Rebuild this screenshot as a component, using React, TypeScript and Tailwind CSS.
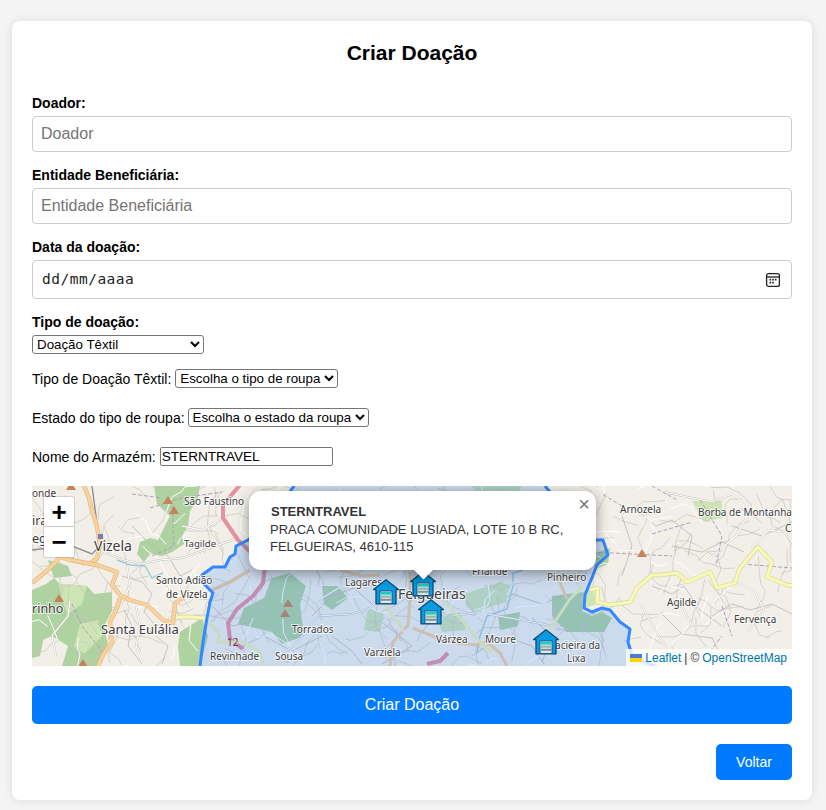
import React from 'react';

const inputCls =
  "w-full h-9 px-2 border border-[#ccc] rounded-[4px] text-base text-black placeholder:text-[#757575] bg-white outline-none";
const selectCls =
  "h-[19px] border border-[#767676] rounded-[3px] bg-white text-[13.33px] text-black";

const BOUNDARY =
  "M168 180 L171 156 L175 132 L178 116 L181 107 L170 96 L170 89 L181 81 L193 81 L198 71 L203 68 L204 60 L210 57 L216 54 L240 30 L262 0";
const BOUNDARY_EAST =
  "M513 0 L530 20 L564 54 L571 54 L576 69 L565 79 L553 109 L552 122 L560 126 L570 122 L578 124 L588 136 L598 143 L596 156 L600 169 L615 177 L628 182";

const FORESTS = [
  "M122 0 L168 0 L166 12 L158 25 L156 40 L150 50 L152 58 L140 66 L130 70 L118 68 L112 76 L105 68 L108 56 L118 52 L126 54 L132 42 L138 30 L125 18 Z",
  "M0 104 L14 98 L22 92 L28 98 L55 100 L62 108 L80 106 L80 125 L72 140 L76 160 L68 180 L30 180 L36 160 L20 150 L6 156 L0 150 Z",
  "M16 74 L36 80 L40 90 L22 92 Z",
  "M148 146 L170 132 L176 150 L168 180 L148 180 L146 160 Z",
  "M240 92 L258 87 L274 100 L268 118 L272 150 L250 158 L240 146 L206 138 L212 122 L232 112 Z",
  "M290 100 L306 100 L316 112 L300 124 L292 118 Z",
  "M0 148 L12 150 L8 170 L0 172 Z",
  "M520 110 L552 106 L550 125 L560 130 L570 126 L580 132 L572 146 L534 146 L520 130 Z",
  "M466 130 L488 126 L486 140 L468 144 Z",
  "M555 70 L578 62 L576 78 L566 82 Z",
];
const LIGHT_FORESTS = [
  "M433 108 L468 96 L480 100 L474 116 L442 126 L434 120 Z",
  "M336 122 L352 128 L348 146 L332 144 Z",
  "M405 130 L428 126 L434 144 L410 146 Z",
  "M27 98 L55 100 L50 118 L36 128 L30 115 Z",
  "M48 138 L66 134 L70 150 L52 168 L42 160 Z",
  "M552 105 L560 100 L566 118 L552 122 Z",
  "M440 0 L490 0 L486 6 L444 6 Z",
  "M660 15 L690 15 L690 32 L672 36 Z",
];
const GREY_ROADS = [
  "M6 60 L20 68 L34 66 L44 74",
  "M100 40 L120 60 L136 70 L148 90 L160 84",
  "M90 90 L110 96 L120 108 L112 126 L124 140",
  "M92 124 L100 140 L96 160 L110 178",
  "M124 150 L136 160 L130 178",
  "M600 20 L624 40 L640 34 L660 50 L656 70",
  "M620 100 L640 108 L652 100 L668 124 L690 140",
  "M680 130 L700 118 L718 124 L740 118 L760 128",
  "M610 135 L630 128 L650 148 L680 152 L692 175",
  "M590 30 L600 60 L590 90",
  "M700 40 L730 50 L760 36",
  "M640 60 L670 66 L690 56 L712 66",
  "M280 130 L300 110 L322 102 L340 118",
  "M350 136 L380 160 L350 178",
  "M440 170 L470 150 L500 160 L512 178",
  "M480 108 L510 118 L530 110",
  "M210 160 L232 150 L260 165 L290 150",
  "M300 150 L320 165 L330 178",
  "M180 120 L200 140 L220 136",
  "M500 132 L520 150 L510 176",
];
const WHITE_ROADS = [
  "M72 66 L92 74 L110 78 L128 74 L150 72 L178 62 L206 52",
  "M95 80 L98 100 L88 120",
  "M38 115 L36 130 L20 150 L24 170",
  "M104 120 L108 140 L104 160 L110 176",
  "M150 40 L170 44 L190 32",
  "M632 6 L660 12 L680 16 L700 8 L720 22 L704 50 L676 74",
  "M720 62 L736 44 L752 46 L760 56",
  "M700 92 L724 108 L732 124 L716 145",
  "M610 120 L622 142 L640 170",
  "M650 120 L660 140 L676 140",
  "M0 50 L20 62 L30 60",
  "M290 124 L290 112 L310 100 M286 130 L320 128 L338 122",
  "M244 170 L262 160 L286 130",
  "M370 92 L350 110 L330 130",
  "M455 128 L500 136 L532 142",
  "M420 130 L450 126",
];
const ORANGE_ROADS = [
  "M52 0 L57 12 L60 25 L65 40 L68 60 L65 72 L58 78",
  "M0 97 L18 82 L28 71 L38 74 L65 79 L85 86 L80 99 L88 109 L98 114 L115 119 L131 134 L141 137 L143 117 L151 112",
  "M88 112 L85 122 L78 136 L80 156 L71 169 L66 180",
];
const TINT_ORANGE = [
  "M308 84 L330 90 L348 89",
  "M378 86 L378 112 L376 139 L361 156 L358 180",
  "M381 142 L415 156 L445 159 L455 156 L468 167 L475 180",
  "M526 92 L535 113",
];
const YELLOW_ROADS = [
  "M145 131 L160 131 L173 132",
  "M558 104 L566 102 L565 116 L578 119 L598 116 L605 102 L620 89 L628 89 L645 87 L655 96 L678 86 L685 102 L703 97 L708 82 L726 61 L740 76 L735 91 L755 99 L762 100",
];
const TINT_YELLOW = [
  "M173 132 L188 149 L185 156 L211 156 L228 166 L231 178",
  "M353 119 L368 139 L372 146",
  "M408 112 L428 132 L448 156 L460 166",
  "M511 167 L520 140 L538 113 L551 100",
];
const PEAKS: [number, number][] = [
  [136, 14], [142, 24], [39, 0], [27, 112], [51, 177], [256, 117], [253, 127], [610, 67],
];
const MARKERS: [number, number][] = [
  [354, 106], [391, 98], [399, 126], [514, 156],
];
type MapLabel = [string, number, number, number];
const LABELS: MapLabel[] = [
  ["onde", 0, 11, 10], ["ira", 0, 39, 12.5], ["eg", 0, 57, 12.5],
  ["São Faustino", 152, 19, 10], ["Vizela", 62, 65, 14], ["Tagilde", 152, 61, 9.6],
  ["Santo Adião", 124, 98, 10], ["de Vizela", 134, 112, 10], ["Santa Eulália", 69, 148, 13],
  ["rinho", 0, 127, 12.5], ["Revinhade", 178, 174, 10], ["Sousa", 243, 174, 10],
  ["Torrados", 260, 147, 10], ["Lagares", 313, 100, 10], ["Felgueiras", 366, 113, 14],
  ["Varziela", 332, 170, 10], ["Friande", 440, 89, 10], ["Pinheiro", 515, 95, 10],
  ["Várzea", 404, 157, 10], ["Moure", 453, 157, 10], ["Macieira da", 514, 163, 10],
  ["Lixa", 535, 176, 10], ["Arnozela", 588, 27, 10], ["Borba de Montanha", 666, 30, 10],
  ["Agilde", 635, 120, 10], ["Fervença", 702, 137, 10], ["Ca", 753, 46, 10],
];

// thin street mesh, the tiles are full of these tiny lines
const buildMesh = (count: number, seed: number) => {
  let s = seed;
  const rnd = () => {
    s = (s * 16807) % 2147483647;
    return s / 2147483647;
  };
  let d = "";
  for (let i = 0; i < count; i++) {
    let x = rnd() * 760;
    let y = rnd() * 180;
    d += `M${x.toFixed(1)} ${y.toFixed(1)}`;
    let a = rnd() * 6.28;
    const steps = 2 + Math.floor(rnd() * 4);
    for (let j = 0; j < steps; j++) {
      a += (rnd() - 0.5) * 1.8;
      const l = 5 + rnd() * 12;
      x += Math.cos(a) * l;
      y += Math.sin(a) * l;
      d += `L${x.toFixed(1)} ${y.toFixed(1)}`;
    }
  }
  return d;
};
const GREY_MESH = buildMesh(260, 4711);
const WHITE_MESH = buildMesh(70, 90210);

const Marker: React.FC<{ x: number; y: number }> = ({ x, y }) => (
  <g transform={`translate(${x - 13} ${y - 13})`}>
    <path d="M13 .8 L25.4 10.6 L23 10.6 L23 24.8 L3 24.8 L3 10.6 L.6 10.6 Z" fill="#089be2" stroke="#0d4b76" strokeWidth="1.3" strokeLinejoin="round" />
    <rect x="7" y="12" width="12" height="12.5" fill="#dfe8e8" stroke="#0d4b76" strokeWidth=".8" />
    <rect x="7.5" y="13" width="11" height="2.6" fill="#19cfc0" />
    <rect x="7.5" y="16.6" width="11" height="2.2" fill="#9fb3b3" />
    <rect x="7.5" y="19.8" width="11" height="2" fill="#7f8f92" />
  </g>
);

const MapDrawing: React.FC = () => (
  <svg viewBox="0 0 760 180" className="block w-[760px] h-[180px]">
    <rect width="760" height="180" fill="#f2efe9" />
    {FORESTS.map((d, i) => <path key={i} d={d} fill="#aed2a0" />)}
    {LIGHT_FORESTS.map((d, i) => <path key={i} d={d} fill="#cde4b4" />)}
    <path d={GREY_MESH} fill="none" stroke="#c9c5bd" strokeWidth=".7" />
    {GREY_ROADS.map((d, i) => <path key={i} d={d} fill="none" stroke="#bdb9b1" strokeWidth=".8" />)}
    <path d="M85 74 L98 79 L113 80 L120 92 L131 87 M445 167 L448 150 L455 130 L475 123 L481 100 L481 87 L492 84" fill="none" stroke="#9fcbdc" strokeWidth="1.4" />
    <path d={WHITE_MESH} fill="none" stroke="#fff" strokeWidth="1" />
    {WHITE_ROADS.map((d, i) => (
      <g key={i} fill="none">
        <path d={d} stroke="#c4c0b8" strokeWidth="1.9" />
        <path d={d} stroke="#fff" strokeWidth="1.2" />
      </g>
    ))}
    <path d="M118 22 L150 12 L190 6 M100 8 L130 12 M590 20 L570 8 M620 0 L645 14 M620 48 L660 36 M668 14 L690 50 L684 80 M690 120 L700 150 M644 176 L676 168 L690 150 M560 66 L640 70 M710 78 L760 82 M40 118 L50 140 L70 165 M140 20 L142 60 L120 70" fill="none" stroke="#b59cc0" strokeWidth="1" strokeDasharray="4 2" />
    <path d="M60 0 L68 60 L60 68 L40 60 L16 70 M0 64 L34 60" fill="none" stroke="#8f8f8f" strokeWidth="1.4" />
    {YELLOW_ROADS.map((d, i) => (
      <g key={i} fill="none" strokeLinejoin="round">
        <path d={d} stroke="#d8d6a0" strokeWidth="4.4" />
        <path d={d} stroke="#f7f9b4" strokeWidth="3.2" />
      </g>
    ))}
    {ORANGE_ROADS.map((d, i) => (
      <g key={i} fill="none" strokeLinejoin="round">
        <path d={d} stroke="#e3b67e" strokeWidth="4.4" />
        <path d={d} stroke="#f9d19c" strokeWidth="3.2" />
      </g>
    ))}
    <path d="M208 -1 L191 19 L191 32 L206 54 L233 80 L231 97 L221 110 L205 123 L196 137 L198 153 L211 163 M395 178 L408 175 L416 167" fill="none" stroke="#e7909f" strokeWidth="4" strokeLinejoin="round" />
    <path d="M180 104 L198 96 L218 84" fill="none" stroke="#f0c89a" strokeWidth="3.4" />
    {TINT_ORANGE.map((d, i) => <path key={i} d={d} fill="none" stroke="#f3cf9e" strokeWidth="3" strokeLinejoin="round" />)}
    {TINT_YELLOW.map((d, i) => <path key={i} d={d} fill="none" stroke="#eef2b2" strokeWidth="3" strokeLinejoin="round" />)}
    {PEAKS.map(([x, y], i) => <path key={i} d={`M${x} ${y - 4} L${x + 5} ${y + 4} L${x - 5} ${y + 4} Z`} fill="#c5835a" />)}
    <rect x="66" y="48" width="5" height="5" fill="#6f7fb8" />
    <path d={`${BOUNDARY} L513 0 ${BOUNDARY_EAST.slice(7)} L760 190 L168 190 Z`} fill="#3388ff" fillOpacity=".2" stroke="none" />
    <path d={BOUNDARY} fill="none" stroke="#3388ff" strokeWidth="3" strokeLinejoin="round" />
    <path d={BOUNDARY_EAST} fill="none" stroke="#3388ff" strokeWidth="3" strokeLinejoin="round" />
    {LABELS.map(([t, x, y, s]) => (
      <text key={t} x={x} y={y} fontSize={s} fontFamily="'Noto Sans',sans-serif" fill="#3c3c3c" stroke="#fff" strokeOpacity=".75" strokeWidth="2" paintOrder="stroke">{t}</text>
    ))}
    <text x="195" y="160" fontSize="10" fontFamily="'Noto Sans',sans-serif" fill="#8a2846">12</text>
    {MARKERS.map(([x, y], i) => <Marker key={i} x={x} y={y} />)}
  </svg>
);

const App: React.FC = () => {
  return (
    <div className="min-h-screen bg-[#f4f4f4] pt-[21px] px-3 pb-[10px] font-['Liberation_Sans',Arial,sans-serif]">
      <div className="w-[800px] h-[779px] bg-white rounded-lg shadow-[0_0_10px_rgba(0,0,0,0.1)] p-5">
        <h2 className="text-[21px] leading-[24px] font-bold text-black text-center mb-[30px]">Criar Doação</h2>

        <div className="flex flex-col gap-[15px]">
          <label className="flex flex-col gap-[5px]">
            <span className="text-sm leading-4 font-bold text-black">Doador:</span>
            <input className={inputCls} placeholder="Doador" />
          </label>
          <label className="flex flex-col gap-[5px]">
            <span className="text-sm leading-4 font-bold text-black">Entidade Beneficiária:</span>
            <input className={inputCls} placeholder="Entidade Beneficiária" />
          </label>
          <div className="flex flex-col gap-[5px]">
            <span className="text-sm leading-4 font-bold text-black">Data da doação:</span>
            <div className="h-[39px] flex items-center justify-between pl-[9px] pr-[10px] border border-[#ccc] rounded-[4px]">
              <span className="font-['DejaVu_Sans_Mono',monospace] text-[14.5px] tracking-[0.5px] text-[#222]">dd/mm/aaaa</span>
              <svg width="16" height="16" viewBox="0 0 16 16" fill="none" stroke="#222" strokeWidth="1.3">
                <rect x="1.6" y="1.6" width="12.8" height="12.8" rx="2" />
                <path d="M1.6 5 H14.4" />
                <path d="M4.5 7.6 h1.6 M7.2 7.6 h1.6 M9.9 7.6 h1.6 M4.5 10.6 h1.6 M7.2 10.6 h1.6" strokeWidth="1.6" />
              </svg>
            </div>
          </div>
          <div className="flex flex-col gap-[5px] items-start">
            <span className="text-sm leading-4 font-bold text-black">Tipo de doação:</span>
            <select className={`${selectCls} w-[172px]`} defaultValue="textil">
              <option value="textil">Doação Têxtil</option>
            </select>
          </div>
        </div>

        <div className="mt-[15px] flex flex-col gap-5 text-sm text-black">
          <div className="h-[19px] flex items-center gap-1">
            <span>Tipo de Doação Têxtil:</span>
            <select className={`${selectCls} w-[163px]`}>
              <option>Escolha o tipo de roupa</option>
            </select>
          </div>
          <div className="h-[19px] flex items-center gap-[3px]">
            <span>Estado do tipo de roupa:</span>
            <select className={`${selectCls} w-[181px]`}>
              <option>Escolha o estado da roupa</option>
            </select>
          </div>
          <div className="h-[19px] flex items-center gap-1">
            <span>Nome do Armazém:</span>
            <input className="w-[173px] h-[19px] border border-[#767676] rounded-[2px] px-[1px] text-[13.6px] text-black" defaultValue="STERNTRAVEL" />
          </div>
        </div>

        <div className="relative mt-5 h-[180px] overflow-hidden">
          <MapDrawing />

          <div className="absolute left-3 top-[11px] w-[30px] rounded-[2px] bg-white shadow-[0_0_0_1px_rgba(0,0,0,0.12)] text-black">
            <div className="h-[30px] flex items-center justify-center border-b border-[#ccc] text-[26px] font-bold leading-none">+</div>
            <div className="h-[30px] flex items-center justify-center text-[26px] font-bold leading-none">−</div>
          </div>

          <div className="absolute left-[217px] top-[5px] w-[347px] h-[79px] bg-white rounded-xl shadow-[0_3px_14px_rgba(0,0,0,0.4)] pl-[21px] pt-3 text-[13px] leading-[17.6px] text-[#333]">
            <div className="font-bold pl-px">STERNTRAVEL</div>
            <div>PRACA COMUNIDADE LUSIADA, LOTE 10 B RC,</div>
            <div>FELGUEIRAS, 4610-115</div>
            <span className="absolute right-[6px] top-[3px] text-[20px] leading-5 text-[#757575]">×</span>
          </div>
          <div className="absolute left-[371px] top-[84px] w-10 h-5 overflow-hidden">
            <div className="absolute left-[11.5px] -top-[11.5px] w-[17px] h-[17px] bg-white rotate-45 shadow-[0_3px_14px_rgba(0,0,0,0.4)]" />
          </div>

          <div className="absolute right-0 bottom-0 h-[17px] flex items-center gap-[3px] bg-white/80 pl-[4px] pr-[5px] text-xs text-[#333]">
            <svg width="12" height="8" viewBox="0 0 12 8">
              <rect width="12" height="4" fill="#4C7BE1" />
              <rect y="4" width="12" height="4" fill="#FFD500" />
            </svg>
            <span className="text-[#0078a8]">Leaflet</span>
            <span>|</span>
            <span>©</span>
            <span className="text-[#0078a8]">OpenStreetMap</span>
          </div>
        </div>

        <button className="mt-5 w-full h-[38px] rounded-[5px] bg-[#007bff] text-white text-base">Criar Doação</button>
        <div className="mt-5 flex justify-end">
          <button className="w-[76px] h-9 rounded-[5px] bg-[#007bff] text-white text-sm">Voltar</button>
        </div>
      </div>
    </div>
  );
};

export default App;
